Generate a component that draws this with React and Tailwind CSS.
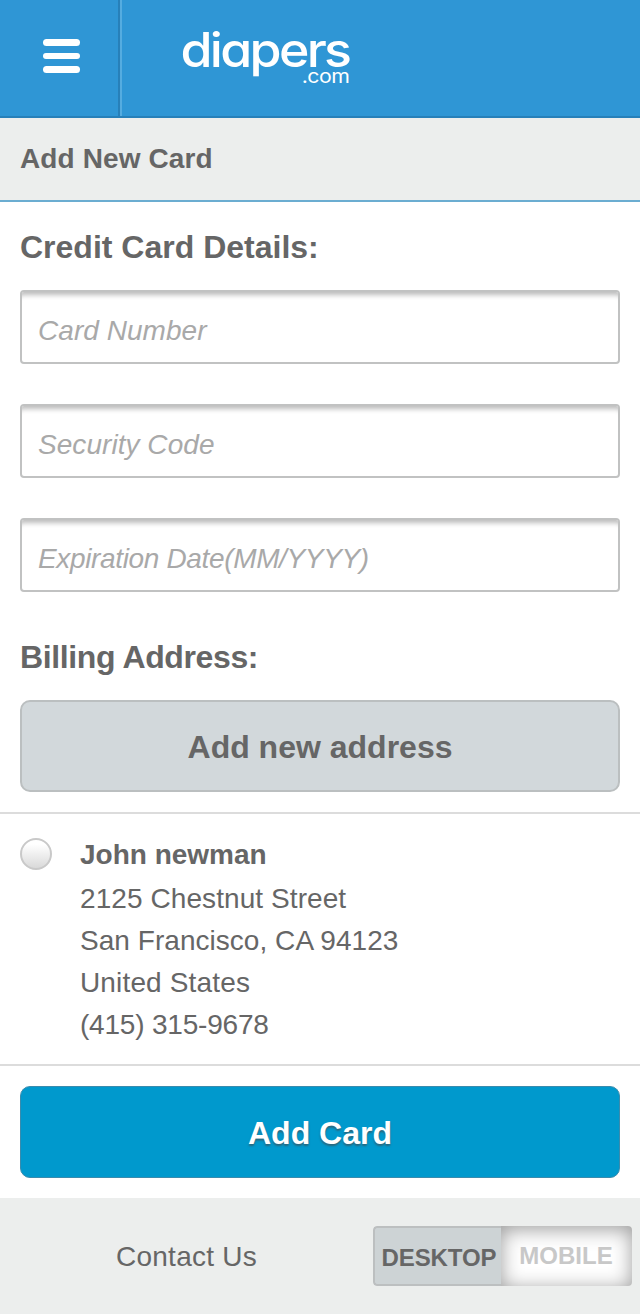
import { useState } from 'react';

const fields = [
  { name: 'cardNumber', label: 'Card Number', spacing: 'tracking-[0.05px]' },
  { name: 'securityCode', label: 'Security Code', spacing: 'tracking-[0.05px]' },
  { name: 'expiration', label: 'Expiration Date(MM/YYYY)', spacing: 'tracking-[-0.35px]' },
];

const addressLines = [
  { text: '2125 Chestnut Street', spacing: 'tracking-[0.08px]' },
  { text: 'San Francisco, CA 94123', spacing: 'tracking-[0.04px]' },
  { text: 'United States', spacing: 'tracking-[0.15px]' },
  { text: '(415) 315-9678', spacing: 'tracking-[-0.2px]' },
];

const Header = () => (
  <header className="flex h-[118px] bg-[#2f96d5] border-b-2 border-[#2780b9]">
    <button
      aria-label="Menu"
      className="flex flex-col items-center justify-center gap-[7px] w-[120px] pl-1 pb-1 border-r-2 border-[#2780b9]"
    >
      <span className="w-[37px] h-[6.5px] rounded-full bg-white" />
      <span className="w-[37px] h-[6.5px] rounded-full bg-white" />
      <span className="w-[37px] h-[6.5px] rounded-full bg-white" />
    </button>
    <div className="flex-1 border-l-2 border-[#55ace0]">
      <div className="flex flex-col items-end w-[227px] pt-[19px] text-white font-['Inter',sans-serif] [font-feature-settings:'cv11']">
        <span className="h-[47px] text-[48px] leading-[62px] font-[460] tracking-[-2.5px] origin-right scale-x-[1.08]">
          diapers
        </span>
        <span className="text-[18.5px] leading-[20px] tracking-[-0.5px] origin-right scale-x-[1.15]">.com</span>
      </div>
    </div>
  </header>
);

const Field = ({ name, label, spacing, value, onChange }) => (
  <input
    name={name}
    placeholder={label}
    value={value}
    onChange={onChange}
    className={`block w-full h-[74px] px-4 pt-2 border-2 border-[#c1c2c2] rounded-[4px] bg-white text-[28px] text-[#666] outline-none shadow-[inset_0_8px_5px_-5px_#bcbcbc] placeholder:italic placeholder:text-[#a9a9a9] placeholder:opacity-100 ${spacing}`}
  />
);

export default function App() {
  const [values, setValues] = useState({});
  const [selected, setSelected] = useState(false);

  return (
    <div className="w-[640px] h-[1314px] overflow-hidden bg-white text-[#666] font-['Liberation_Sans',Arial,sans-serif]">
      <Header />

      <div className="flex items-center h-[84px] px-5 bg-[#eceeed] border-b-2 border-[#6badd1]">
        <h1 className="text-[28px] leading-[32px] font-bold tracking-[0.12px]">Add New Card</h1>
      </div>

      {/* Card details */}
      <section className="px-5">
        <h2 className="flex items-center h-[88px] pt-px text-[32px] leading-[36px] font-bold">
          Credit Card Details:
        </h2>
        <div className="flex flex-col gap-10">
          {fields.map((field) => (
            <Field
              key={field.name}
              {...field}
              value={values[field.name] || ''}
              onChange={(e) => setValues({ ...values, [field.name]: e.target.value })}
            />
          ))}
        </div>
      </section>

      {/* Billing address */}
      <section>
        <div className="px-5 pb-5">
          <h2 className="flex items-center h-[108px] pt-[22px] text-[32px] leading-[36px] font-bold tracking-[-0.38px]">
            Billing Address:
          </h2>
          <button className="flex items-center justify-center w-full h-[92px] pt-0.5 border-2 border-[#bbbfc0] rounded-[10px] bg-[#d2d8db] text-[32px] leading-[36px] font-bold">
            Add new address
          </button>
        </div>

        <div className="flex h-[254px] px-5 border-y-2 border-[#dcdcdc]">
          <button
            role="radio"
            aria-checked={selected}
            aria-label="John newman"
            onClick={() => setSelected(!selected)}
            className="shrink-0 size-8 mt-6 mr-7 rounded-full border-2 border-[#c9c9c9] bg-linear-to-b from-white from-20% to-[#d6d6d6] bg-origin-border"
          />
          <div className="pt-5 text-[28px] leading-[42px]">
            <p className="mb-0.5 font-bold">John newman</p>
            {addressLines.map((line) => (
              <p key={line.text} className={line.spacing}>
                {line.text}
              </p>
            ))}
          </div>
        </div>
      </section>

      <div className="p-5">
        <button className="flex items-center justify-center w-full h-[92px] pt-0.5 border border-[#3a8bad] rounded-[10px] bg-[#0099cd] text-[32px] leading-[36px] font-bold text-white [text-shadow:0_2px_2px_rgba(70,70,70,0.6)]">
          Add Card
        </button>
      </div>

      {/* Footer */}
      <footer className="flex items-center h-[116px] pr-2 bg-[#eceeed]">
        <a className="flex-1 pt-0.5 text-center text-[28px] leading-[32px] tracking-[0.25px]">Contact Us</a>
        <div className="flex w-[259px] h-[60px] rounded-[4px] overflow-hidden text-[24px] leading-[28px] font-bold">
          <button className="flex items-center justify-center w-[128px] pl-0.5 pt-[3px] border-2 border-r-0 border-[#bcbfc0] rounded-l-[4px] bg-[#cdd3d5] tracking-[-0.1px]">
            DESKTOP
          </button>
          <button className="flex items-center justify-center flex-1 pr-px bg-white text-[#c8c8c8] shadow-[inset_0_3px_20px_#999]">
            MOBILE
          </button>
        </div>
      </footer>
    </div>
  );
}
